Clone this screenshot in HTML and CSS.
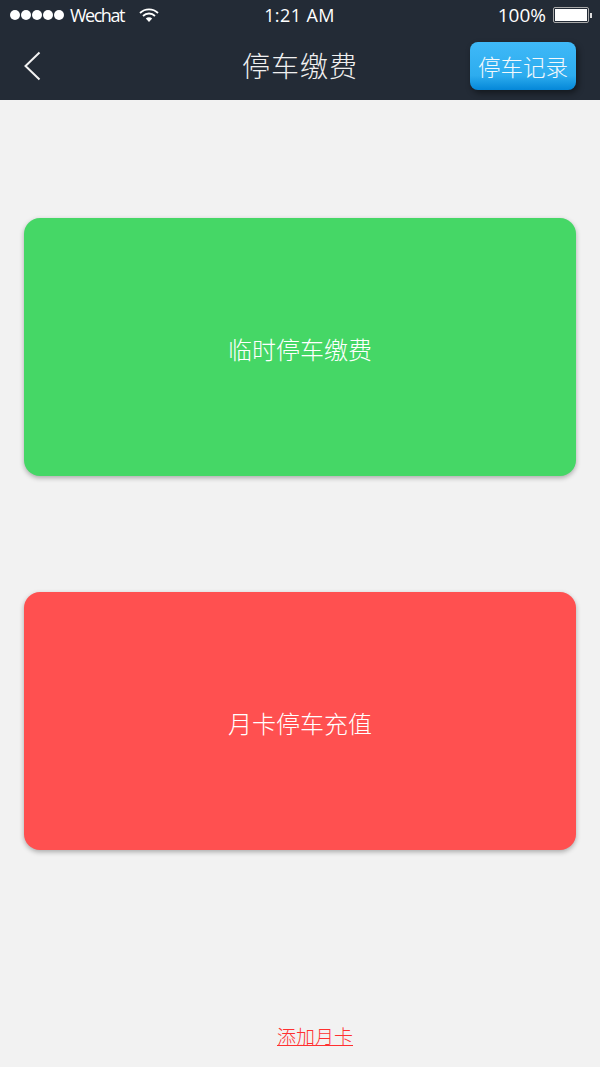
FILE: index.html
```html
<!DOCTYPE html>
<html lang="zh">
<head>
    <meta charset="UTF-8">
    <meta name="viewport" content="width=device-width, initial-scale=1.0">
    <title>停车缴费</title>
    <link rel="stylesheet" href="styles.css">
</head>
<body>
    <div class="top">
        <div class="status-bar">
            <div class="status-left">
                <span class="signal"><i></i><i></i><i></i><i></i><i></i></span>
                <span class="carrier">Wechat</span>
                <svg class="wifi" width="20" height="14" viewBox="0 0 20 14">
                    <path d="M1 5 A13 13 0 0 1 19 5" fill="none" stroke="#fff" stroke-width="1.8"/>
                    <path d="M4 8 A8.5 8.5 0 0 1 16 8" fill="none" stroke="#fff" stroke-width="1.8"/>
                    <path d="M6.8 10.6 A4.4 4.4 0 0 1 13.2 10.6 L10 14 Z" fill="#fff"/>
                </svg>
            </div>
            <div class="status-time">1:21 AM</div>
            <div class="status-right">
                <span class="percent">100%</span>
                <span class="battery"><span class="battery-fill"></span></span>
                <span class="battery-tip"></span>
            </div>
        </div>
        <div class="nav-bar">
            <svg class="back" width="18" height="30" viewBox="0 0 18 30">
                <path d="M15.5 1.5 L1.5 15 L15.5 28.5" fill="none" stroke="#f2f2f2" stroke-width="2"/>
            </svg>
            <h1 class="nav-title">停车缴费</h1>
            <a class="record-button">停车记录</a>
        </div>
    </div>

    <div class="content">
        <a class="card card-green">临时停车缴费</a>
        <a class="card card-red">月卡停车充值</a>
        <a class="add-card">添加月卡</a>
    </div>
</body>
</html>
```

FILE: styles.css
```css
* {
    box-sizing: border-box;
}
html, body {
    height: 100%;
}
body {
    margin: 0;
    background-color: #f2f2f2;
    font-family: "Noto Sans CJK SC", "Liberation Sans", sans-serif;
    display: flex;
    flex-direction: column;
}
.top {
    background-color: #232b36;
    height: 100px;
    flex-shrink: 0;
}
.status-bar {
    height: 30px;
    padding: 0 8px 0 10px;
    display: grid;
    grid-template-columns: 1fr auto 1fr;
    align-items: center;
    color: #fff;
}
.status-left {
    display: flex;
    align-items: center;
}
.signal {
    display: flex;
    gap: 1px;
}
.signal i {
    display: block;
    width: 10px;
    height: 10px;
    border-radius: 50%;
    background-color: #fff;
}
.carrier {
    font-family: "Open Sans", sans-serif;
    font-size: 18px;
    letter-spacing: -1.5px;
    margin-left: 6px;
}
.wifi {
    margin-left: 15px;
}
.status-time {
    font-family: "Open Sans", sans-serif;
    font-size: 18px;
    letter-spacing: 0.4px;
    margin-right: 3px;
}
.status-right {
    display: flex;
    align-items: center;
    justify-content: flex-end;
}
.percent {
    font-family: "Open Sans", sans-serif;
    font-size: 19px;
    margin-right: 7px;
}
.battery {
    width: 36px;
    height: 16px;
    border: 1px solid #aaa;
    border-radius: 2px;
    padding: 1px;
    display: block;
}
.battery-fill {
    display: block;
    height: 100%;
    background-color: #fff;
}
.battery-tip {
    width: 2px;
    height: 5px;
    margin-left: 1px;
    background-color: #ddd;
}
.nav-bar {
    height: 70px;
    padding: 0 24px;
    display: grid;
    grid-template-columns: 1fr auto 1fr;
    align-items: center;
}
.back {
    margin-top: 2px;
}
.nav-title {
    margin: 0;
    font-size: 28px;
    font-weight: 300;
    line-height: 70px;
    color: #f0f0f0;
    letter-spacing: 1px;
}
.record-button {
    justify-self: end;
    width: 106px;
    height: 48px;
    margin-top: 1px;
    border-radius: 8px;
    background: linear-gradient(#3fb9f8, #2dacee 70%, #0487d8);
    box-shadow: 2px 3px 6px rgba(0, 0, 0, 0.45);
    color: #f4f9fc;
    font-size: 22.5px;
    font-weight: 300;
    line-height: 48px;
    text-align: center;
}
.content {
    flex: 1;
    padding: 118px 24px 0;
    display: flex;
    flex-direction: column;
}
.card {
    display: block;
    height: 258px;
    border-radius: 16px;
    box-shadow: 0 2px 5px rgba(0, 0, 0, 0.3);
    color: #fff;
    font-size: 24px;
    font-weight: 300;
    line-height: 261px;
    text-align: center;
}
.card-green {
    background-color: #45d766;
    margin-bottom: 116px;
}
.card-red {
    background-color: #ff5050;
}
.add-card {
    margin-top: 172px;
    padding-left: 30px;
    color: #ff3030;
    font-size: 19px;
    font-weight: 300;
    line-height: 28px;
    text-align: center;
    text-decoration: underline;
}
```
